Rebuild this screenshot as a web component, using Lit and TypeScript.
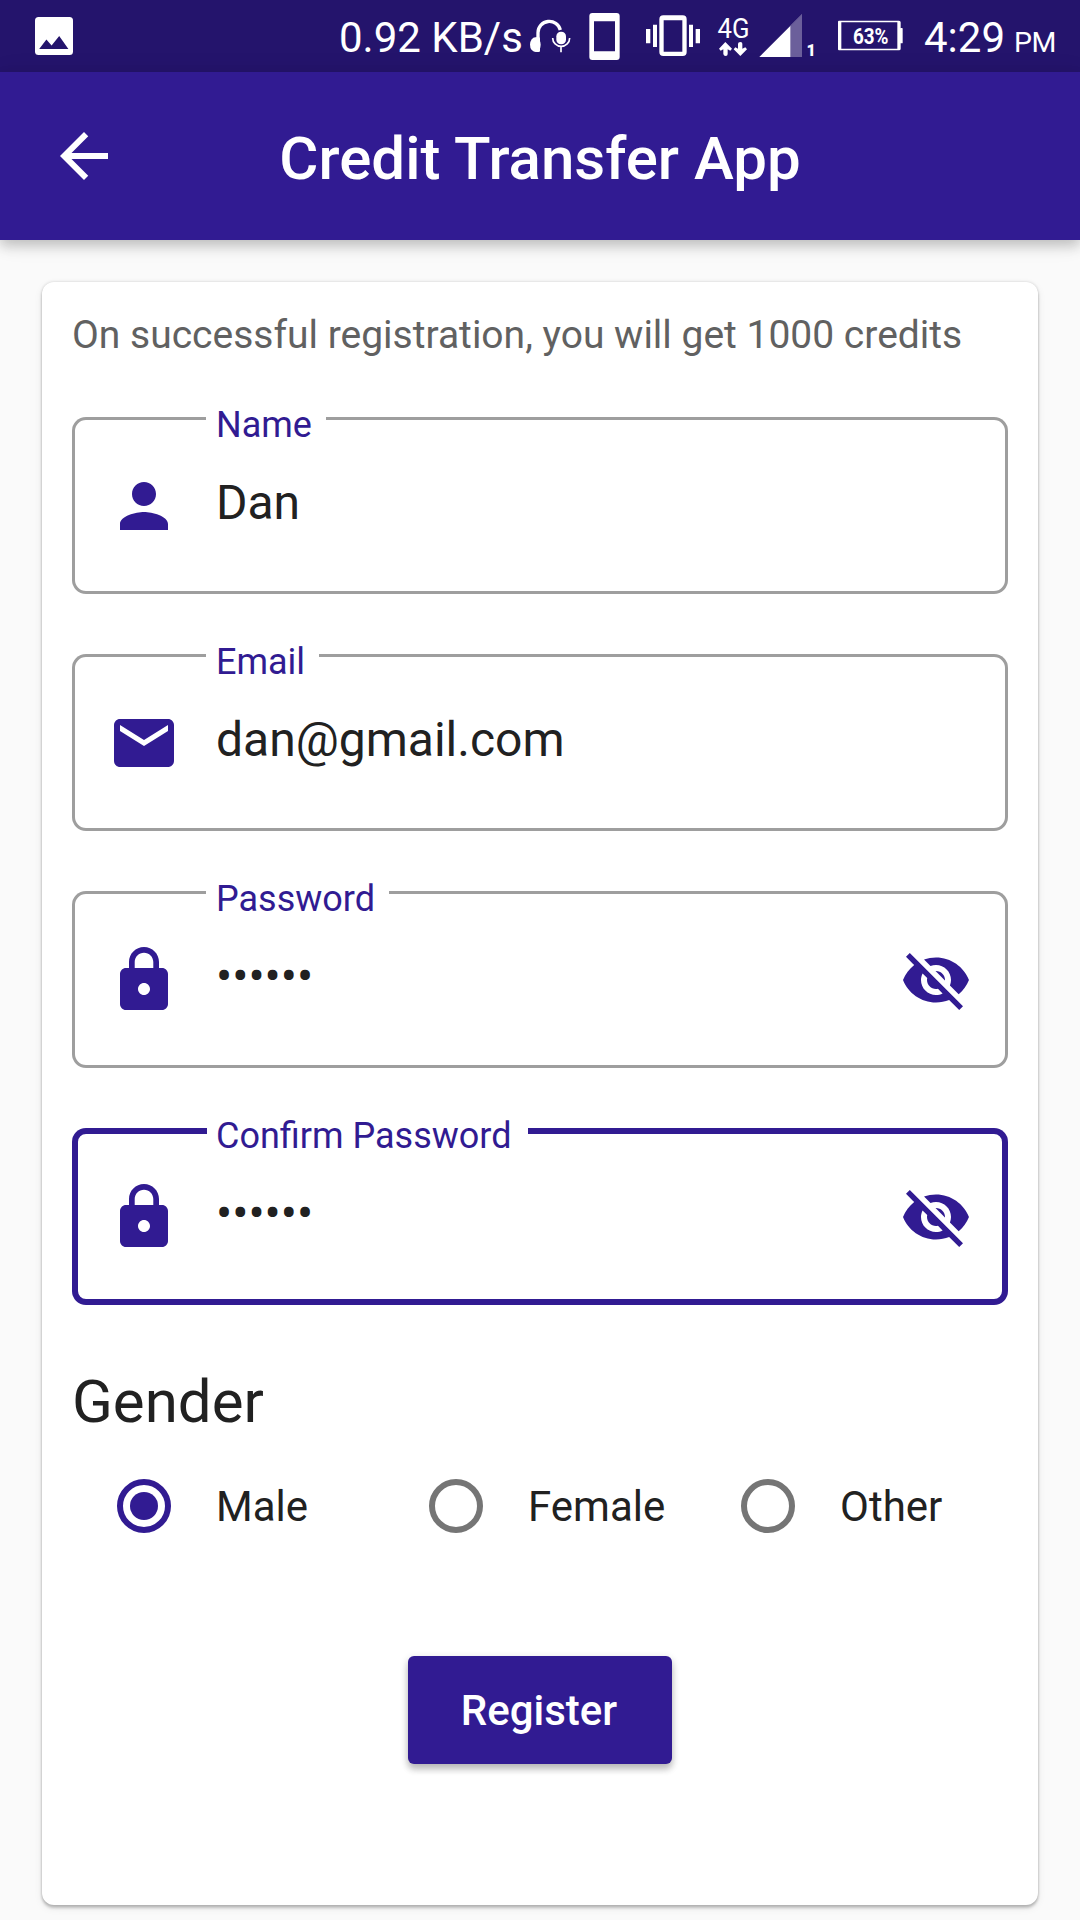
import { LitElement, html, css, nothing } from "lit";
import { customElement, property, state } from "lit/decorators.js";
import { classMap } from "lit/directives/class-map.js";

const ICONS: Record<string, string> = {
  back: "M20 11H7.83l5.59-5.59L12 4l-8 8 8 8 1.41-1.41L7.83 13H20v-2z",
  person:
    "M12 12c2.21 0 4-1.79 4-4s-1.79-4-4-4-4 1.79-4 4 1.79 4 4 4zm0 2c-2.67 0-8 1.34-8 4v2h16v-2c0-2.66-5.33-4-8-4z",
  mail: "M20 4H4c-1.1 0-1.99.9-1.99 2L2 18c0 1.1.9 2 2 2h16c1.1 0 2-.9 2-2V6c0-1.1-.9-2-2-2zm0 4l-8 5-8-5V6l8 5 8-5v2z",
  lock: "M18 8h-1V6c0-2.76-2.24-5-5-5S7 3.24 7 6v2H6c-1.1 0-2 .9-2 2v10c0 1.1.9 2 2 2h12c1.1 0 2-.9 2-2V10c0-1.1-.9-2-2-2zm-6 9c-1.1 0-2-.9-2-2s.9-2 2-2 2 .9 2 2-.9 2-2 2zm3.1-9H8.9V6c0-1.71 1.39-3.1 3.1-3.1 1.71 0 3.1 1.39 3.1 3.1v2z",
  hidden:
    "M12 7c2.76 0 5 2.24 5 5 0 .65-.13 1.26-.36 1.83l2.92 2.92c1.51-1.26 2.7-2.89 3.43-4.75-1.73-4.39-6-7.5-11-7.5-1.4 0-2.74.25-3.98.7l2.16 2.16C10.74 7.13 11.35 7 12 7zM2 4.27l2.28 2.28.46.46C3.08 8.3 1.78 10.02 1 12c1.73 4.39 6 7.5 11 7.5 1.55 0 3.03-.3 4.38-.84l.42.42L19.73 22 21 20.73 3.27 3 2 4.27zM7.53 9.8l1.55 1.55c-.05.21-.08.43-.08.65 0 1.66 1.34 3 3 3 .22 0 .44-.03.65-.08l1.55 1.55c-.67.33-1.41.53-2.2.53-2.76 0-5-2.24-5-5 0-.79.2-1.53.53-2.2zm4.31-.78l3.15 3.15.02-.16c0-1.66-1.34-3-3-3l-.17.01z",
};

@customElement("md-icon")
export class MdIcon extends LitElement {
  @property() name = "";

  static styles = css`
    :host { display: block; width: 72px; height: 72px; flex: none; }
    .glyph { display: block; width: 100%; height: 100%; fill: currentColor; }
  `;

  render() {
    return html`<svg class="glyph" viewBox="0 0 24 24"><path d=${ICONS[this.name] ?? ""}></path></svg>`;
  }
}

@customElement("status-bar")
export class StatusBar extends LitElement {
  static styles = css`
    :host {
      display: flex;
      height: 72px;
      background: #24146c;
      color: #fff;
      font-family: Roboto, sans-serif;
      white-space: nowrap;
    }
    svg { display: block; flex: none; fill: #fff; height: 72px; }
    .picture { width: 38px; margin-left: 35px; }
    .cut { fill: #24146c; }
    .speed {
      width: 181px;
      margin-left: 266px;
      font-size: 42px;
      line-height: 75px;
      height: 72px;
    }
    .indicators { width: 300px; margin-right: 18px; }
    .line { fill: none; stroke: #fff; }
    .faint { fill: #6b5f9b; }
    .net { font-size: 27.5px; }
    .sim { font-size: 16px; font-weight: 900; }
    .battery { width: 66px; }
    .level { font-size: 22px; font-weight: 700; }
    .clock { margin-left: 20px; font-size: 42px; line-height: 75px; height: 72px; }
    .period { font-size: 28.5px; margin-left: 9px; letter-spacing: -0.6px; }
  `;

  render() {
    return html`
      <svg class="picture" viewBox="0 0 38 72">
        <rect y="17" width="38" height="38" rx="3.5"></rect>
        <path class="cut" d="M4.2 49 11.4 39.5 16.6 45.4 24.2 36 33.4 49z"></path>
      </svg>
      <div class="speed">0.92 KB/s</div>
      <svg class="indicators" viewBox="0 0 900 216">
        <ellipse cx="46" cy="134" rx="16" ry="22"></ellipse>
        <rect x="46" y="112" width="14" height="44" rx="4"></rect>
        <path class="line" stroke-width="10" d="M54 120V98a34 34 0 0 1 67-8"></path>
        <rect x="109" y="95" width="29" height="38" rx="14"></rect>
        <path class="line" stroke-width="5" d="M98 114a25.500 25 0 0 0 51 0M123 139v18"></path>
        <path fill-rule="evenodd" d="M217 39h73q9 0 9 9v123q0 9-9 9h-73q-9 0-9-9V48q0-9 9-9zM222 64v90h63V64z"></path>
        <path fill-rule="evenodd" d="M430 46h58q12 0 12 12v98q0 12-12 12h-58q-12 0-12-12V58q0-12 12-12zM431 61v94h56V61z"></path>
        <path d="M378 87h13v43h-13zM399 74h12v67h-12zM507 74h12v67h-12zM527 87h13v43h-13z"></path>
        <path d="M616 126l20 20-5 6-8-4v14q0 6-6 6t-7-6v-14l-8 4-5-6zM661 168l-20-20 5-6 8 4v-14q0-6 7-6t6 6v14l9-4 5 6z"></path>
        <path d="M718 171 846 43V171z"></path>
        <path class="cut" d="M812 77 846 43V171H812z"></path>
        <path class="faint" d="M812 77 846 43V171H812z"></path>
        <g transform="scale(3)">
          <text class="net" x="197.500" y="38" textLength="32" lengthAdjust="spacingAndGlyphs">4G</text>
          <text class="sim" x="286.500" y="56">1</text>
        </g>
      </svg>
      <svg class="battery" viewBox="0 0 198 216">
        <path fill-rule="evenodd" d="M3 62H183q5 0 5 5v79q0 5-5 5H3q-3 0-3-3V65q0-3 3-3zM10 67v79H178V67z"></path>
        <rect x="186" y="84" width="8" height="46" rx="2"></rect>
        <g transform="scale(3)">
          <text class="level" x="15" y="44" textLength="35.500" lengthAdjust="spacingAndGlyphs">63%</text>
        </g>
      </svg>
      <div class="clock">4:29<span class="period">PM</span></div>
    `;
  }
}

@customElement("outlined-field")
export class OutlinedField extends LitElement {
  @property() label = "";
  @property() icon = "";
  @property() value = "";
  @property({ type: Boolean }) secret = false;
  @property({ type: Boolean }) focused = false;

  static styles = css`
    :host { display: block; font-family: Roboto, sans-serif; }
    .box {
      position: relative;
      display: flex;
      box-sizing: border-box;
      height: 177px;
      padding: 53px 36px 0;
      border-radius: 14px;
      box-shadow: inset 0 0 0 3px #9e9e9e;
      color: #311b92;
    }
    .focused { box-shadow: inset 0 0 0 6px #311b92; }
    .label {
      position: absolute;
      left: 134px;
      top: -13px;
      height: 42px;
      padding: 0 14px 0 10px;
      background: #fff;
      font-size: 36px;
      line-height: 42px;
    }
    .focused .label { left: 135px; padding-left: 9px; padding-right: 16px; }
    .value {
      flex: 1;
      margin-left: 36px;
      height: 56px;
      margin-top: 5px;
      font-size: 48px;
      line-height: 56px;
      color: #212121;
    }
  `;

  render() {
    return html`
      <div class=${classMap({ box: true, focused: this.focused })}>
        <span class="label">${this.label}</span>
        <md-icon name=${this.icon}></md-icon>
        <div class="value">${this.secret ? "•".repeat(this.value.length) : this.value}</div>
        ${this.secret ? html`<md-icon name="hidden"></md-icon>` : nothing}
      </div>
    `;
  }
}

@customElement("app-root")
export class AppRoot extends LitElement {
  @state() private gender = "Male";

  private fields = [
    { label: "Name", icon: "person", value: "Dan" },
    { label: "Email", icon: "mail", value: "dan@gmail.com" },
    { label: "Password", icon: "lock", value: "secret", secret: true },
    { label: "Confirm Password", icon: "lock", value: "secret", secret: true, focused: true },
  ];

  static styles = css`
    :host {
      display: flex;
      flex-direction: column;
      width: 1080px;
      height: 1920px;
      overflow: hidden;
      background: #fafafa;
      color: #212121;
      font-family: Roboto, sans-serif;
    }
    .appbar {
      display: grid;
      grid-template-columns: 168px 1fr 168px;
      align-items: center;
      height: 168px;
      flex: none;
      background: #311b92;
      color: #fff;
      box-shadow: 0 6px 12px rgba(0, 0, 0, 0.2), 0 2px 24px rgba(0, 0, 0, 0.08);
    }
    .back { justify-self: center; }
    .title {
      text-align: center;
      font-size: 60px;
      font-weight: 500;
      line-height: 70px;
      padding-top: 6px;
      white-space: nowrap;
    }
    .card {
      display: flex;
      flex-direction: column;
      box-sizing: border-box;
      height: 1623px;
      flex: none;
      margin: 42px 42px 0;
      padding: 0 30px;
      border-radius: 12px;
      background: #fff;
      box-shadow: 0 3px 3px rgba(0, 0, 0, 0.2), 0 0 3px rgba(0, 0, 0, 0.16), 0 3px 9px rgba(0, 0, 0, 0.08);
    }
    .note {
      height: 46px;
      margin-top: 30px;
      font-size: 39px;
      line-height: 46px;
      color: #616161;
      white-space: nowrap;
    }
    .fields { display: flex; flex-direction: column; gap: 60px; margin-top: 59px; }
    .heading { margin-top: 62px; font-size: 60px; line-height: 70px; }
    .choices { display: grid; grid-template-columns: repeat(3, 1fr); margin-top: 33px; height: 72px; }
    .choice { display: flex; align-items: center; padding-left: 45px; font-size: 42px; cursor: pointer; }
    .ring {
      display: flex;
      align-items: center;
      justify-content: center;
      box-sizing: border-box;
      width: 54px;
      height: 54px;
      margin-right: 45px;
      border: 6px solid #757575;
      border-radius: 50%;
    }
    .on { border-color: #311b92; }
    .on::after { content: ""; width: 28px; height: 28px; border-radius: 50%; background: #311b92; }
    .register {
      align-self: center;
      width: 264px;
      height: 108px;
      margin-top: 114px;
      padding: 0 2px 0 0;
      border: 0;
      border-radius: 6px;
      background: #311b92;
      color: #fff;
      font: 500 42px Roboto, sans-serif;
      box-shadow: 0 6px 6px rgba(0, 0, 0, 0.14), 0 3px 9px rgba(0, 0, 0, 0.2);
    }
  `;

  render() {
    return html`
      <status-bar></status-bar>
      <header class="appbar">
        <md-icon class="back" name="back"></md-icon>
        <div class="title">Credit Transfer App</div>
      </header>
      <main class="card">
        <div class="note">On successful registration, you will get 1000 credits</div>
        <div class="fields">
          ${this.fields.map(
            (f) => html`<outlined-field
              .label=${f.label}
              .icon=${f.icon}
              .value=${f.value}
              .secret=${f.secret ?? false}
              .focused=${f.focused ?? false}
            ></outlined-field>`
          )}
        </div>
        <div class="heading">Gender</div>
        <div class="choices">
          ${["Male", "Female", "Other"].map(
            (g) => html`<div class="choice" @click=${() => (this.gender = g)}>
              <span class=${classMap({ ring: true, on: this.gender === g })}></span>${g}
            </div>`
          )}
        </div>
        <button class="register">Register</button>
      </main>
    `;
  }
}
